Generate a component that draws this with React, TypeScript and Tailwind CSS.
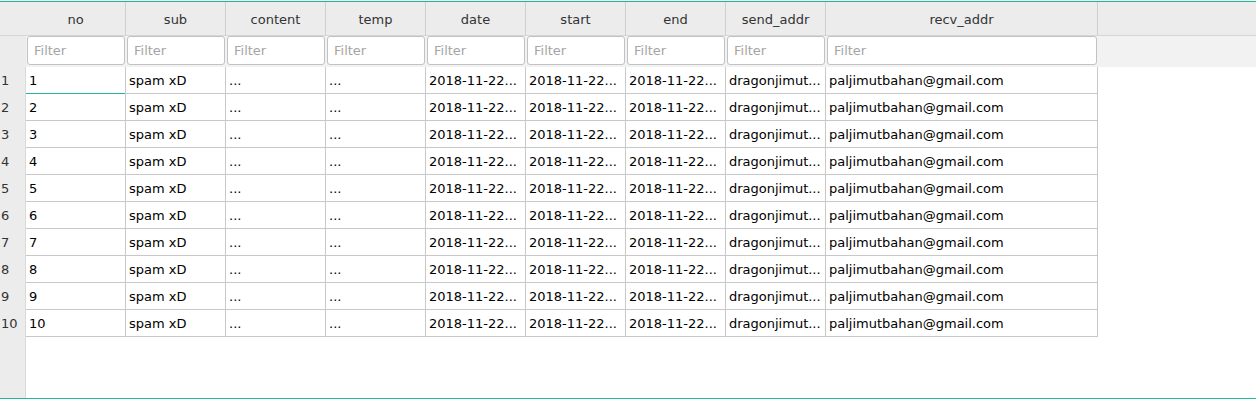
const COLUMNS = [
  { key: 'no', width: 'w-[100px]' },
  { key: 'sub', width: 'w-[100px]' },
  { key: 'content', width: 'w-[100px]' },
  { key: 'temp', width: 'w-[100px]' },
  { key: 'date', width: 'w-[100px]' },
  { key: 'start', width: 'w-[100px]' },
  { key: 'end', width: 'w-[100px]' },
  { key: 'send_addr', width: 'w-[100px]' },
  { key: 'recv_addr', width: 'w-[272px]' },
];

const ROWS = Array.from({ length: 10 }, (_, i) => [
  String(i + 1),
  'spam xD',
  '...',
  '...',
  '2018-11-22...',
  '2018-11-22...',
  '2018-11-22...',
  'dragonjimut...',
  'paljimutbahan@gmail.com',
]);

export default function App() {
  return (
    <div className="w-[1256px] h-[402px] bg-white flex flex-col text-[13px] font-['DejaVu_Sans',sans-serif] overflow-hidden">
      <div className="h-px bg-[#f4f4f4]" />
      <div className="h-[398px] border-y border-[#1fb999] flex">
        {/* row numbers */}
        <div className="w-[26px] shrink-0 bg-[#ececec] flex flex-col">
          <div className="h-[34px] border-b border-[#d6d6d6]" />
          <div className="h-[31px]" />
          <div className="flex-1 border-r border-[#d9d9d9] text-[#333]">
            {ROWS.map((r) => (
              <div key={r[0]} className="h-[27px] leading-[26px] pt-px pl-[1px]">
                {r[0]}
              </div>
            ))}
          </div>
        </div>

        <div className="flex-1 flex flex-col">
          {/* header */}
          <div className="h-[34px] flex bg-[#ececec] border-b border-[#d6d6d6] text-[#333]">
            {COLUMNS.map((c) => (
              <div
                key={c.key}
                className={`${c.width} shrink-0 border-r border-[#cfcfcf] flex items-center justify-center pt-[3px]`}
              >
                {c.key}
              </div>
            ))}
          </div>

          {/* filters */}
          <div className="h-[31px] flex bg-[#f2f2f2]">
            {COLUMNS.map((c) => (
              <div key={c.key} className={`${c.width} shrink-0 px-px pt-0 pb-[2px]`}>
                <div className="h-[29px] bg-white border border-[#c2c2c2] rounded-[3px] flex items-center pl-[6px] text-[#a5a5a5]">
                  Filter
                </div>
              </div>
            ))}
          </div>

          {/* data */}
          <div className="flex-1">
            {ROWS.map((r, ri) => (
              <div key={ri} className="flex h-[27px]">
                {r.map((v, ci) => (
                  <div
                    key={ci}
                    className={`${COLUMNS[ci].width} shrink-0 flex flex-col border-r border-[#c8c8c8] text-black whitespace-nowrap overflow-hidden`}
                  >
                    <div className="h-[26px] pl-[3px] pt-px leading-[25px]">{v}</div>
                    <div className={ri === 0 && ci === 0 ? 'h-px bg-[#1fb999]' : 'h-px bg-[#c8c8c8]'} />
                  </div>
                ))}
              </div>
            ))}
          </div>
        </div>
      </div>
    </div>
  );
}
